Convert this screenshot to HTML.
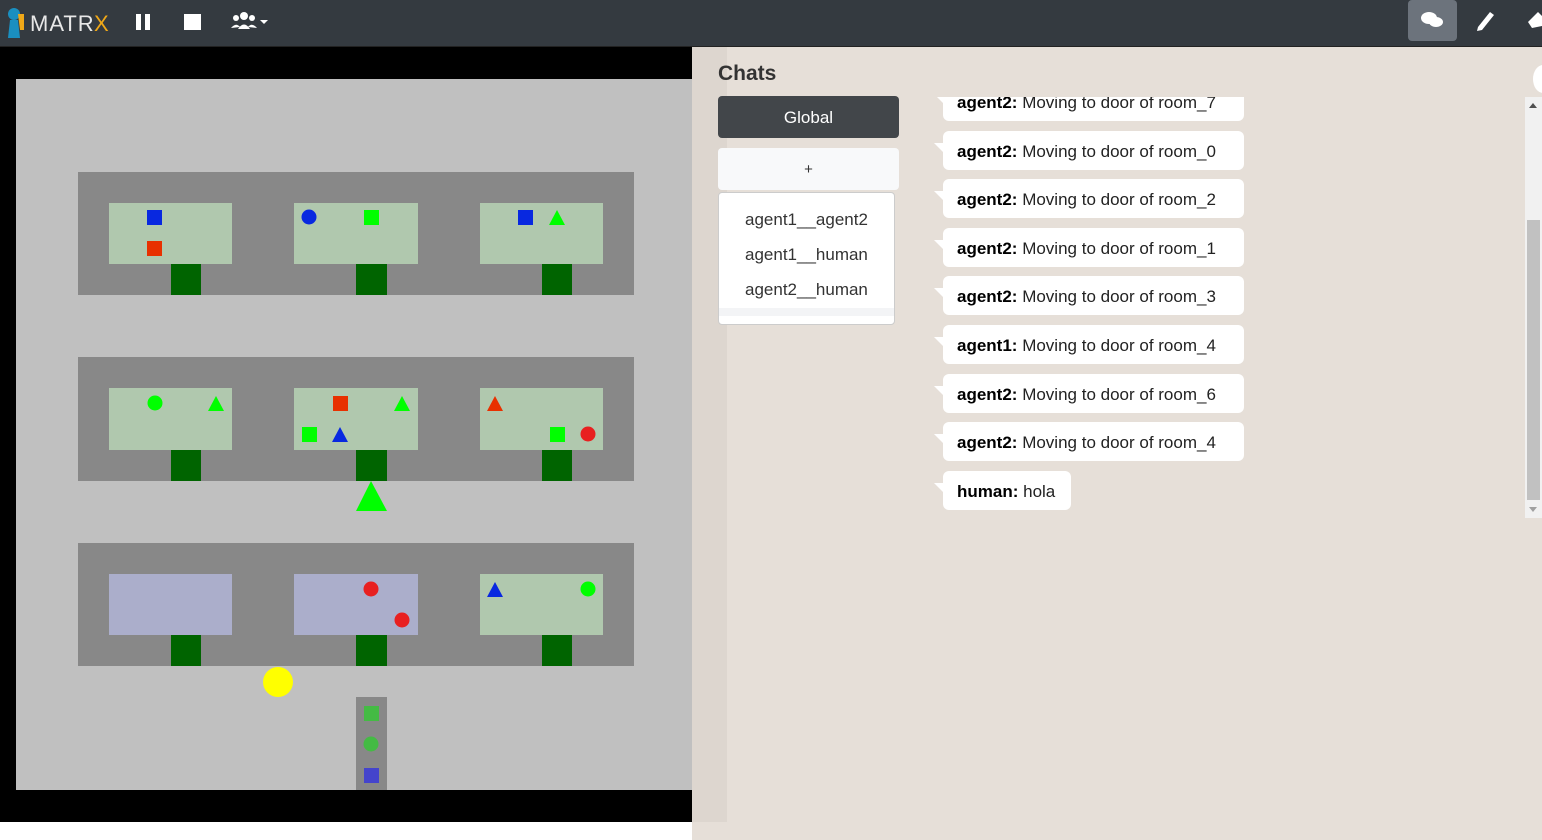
<!DOCTYPE html>
<html><head><meta charset="utf-8"><style>
*{margin:0;padding:0;box-sizing:border-box}
body{width:1542px;height:840px;overflow:hidden;background:#fff;font-family:"Liberation Sans",sans-serif;position:relative}
.nav{position:absolute;left:0;top:0;width:1542px;height:47px;background:#343a40;border-bottom:1px solid #222}
.black{position:absolute;left:0;top:47px;width:692px;height:775px;background:#000}
.panel{position:absolute;left:692px;top:47px;width:850px;height:793px;background:#e6dfd8}
.strip{position:absolute;left:0;top:0;width:35px;height:775px;background:#ddd6cf}
.bub{position:absolute;left:251px;height:39px;background:#fff;border-radius:6px;font-size:17px;line-height:41px;padding-left:14px;color:#222;white-space:nowrap}
.bub:before{content:"";position:absolute;left:-9px;top:12px;border-top:0 solid transparent;border-right:10px solid #fff;border-bottom:10px solid transparent}
.bub b{color:#000}
</style></head><body>
<div class="nav">
 <svg width="300" height="47" style="position:absolute;left:0;top:0">
  <circle cx="14" cy="14" r="6" fill="#1a8fc0"/>
  <path d="M10 20 L18 20 L20 38 L8 38 Z" fill="#1a8fc0"/>
  <path d="M18 14 L24 14 L24 30 L20 30 Z" fill="#f0a818"/>
  <text x="30" y="31" font-family="Liberation Sans" font-size="22" fill="#e8e8e8" letter-spacing="1">MATR</text>
  <text x="94" y="31" font-family="Liberation Sans" font-size="22" fill="#f0a818">X</text>
  <rect x="136" y="14" width="5" height="16" fill="#fff"/><rect x="145" y="14" width="5" height="16" fill="#fff"/>
  <rect x="184" y="14" width="17" height="16" fill="#fff"/>
  <circle cx="244" cy="16" r="4" fill="#fff"/><circle cx="236" cy="18" r="3" fill="#fff"/><circle cx="252" cy="18" r="3" fill="#fff"/>
  <path d="M238 29 Q244 20 250 29 Z M231 28 Q236 22 240 27 Z M248 27 Q252 22 257 28 Z" fill="#fff"/>
  <path d="M260 20 L268 20 L264 24 Z" fill="#fff"/>
 </svg>
 <div style="position:absolute;left:1408px;top:0;width:49px;height:41px;background:#6c737c;border-radius:4px"></div>
 <svg width="134" height="47" style="position:absolute;left:1408px;top:0">
  <ellipse cx="21" cy="18" rx="8" ry="6" fill="#fff"/><ellipse cx="28" cy="22" rx="7" ry="5" fill="#fff"/>
  <path d="M70 27 L82 12 L86 15 L74 30 L69 31 Z" fill="#fff"/>
  <path d="M120 22 L130 12 L134 16 L134 26 L124 28 Z" fill="#fff"/>
 </svg>
</div>
<div class="black"></div>
<svg width="676" height="711" style="position:absolute;left:16px;top:79px">
 <g transform="translate(-16,-79)">
 <rect x="16" y="79" width="676" height="711" fill="#c0c0c0"/>
 <rect x="78" y="172" width="556" height="123" fill="#888"/>
 <rect x="78" y="357" width="556" height="124" fill="#888"/>
 <rect x="78" y="543" width="556" height="123" fill="#888"/>
 <g fill="#b0c8ae">
  <rect x="109" y="203" width="123" height="61"/><rect x="294" y="203" width="124" height="61"/><rect x="480" y="203" width="123" height="61"/>
  <rect x="109" y="388" width="123" height="62"/><rect x="294" y="388" width="124" height="62"/><rect x="480" y="388" width="123" height="62"/>
  <rect x="480" y="574" width="123" height="61"/>
 </g>
 <rect x="109" y="574" width="123" height="61" fill="#abaecb"/><rect x="294" y="574" width="124" height="61" fill="#abaecb"/>
 <g fill="#006400">
  <rect x="171" y="264" width="30" height="31"/><rect x="356" y="264" width="31" height="31"/><rect x="542" y="264" width="30" height="31"/>
  <rect x="171" y="450" width="30" height="31"/><rect x="356" y="450" width="31" height="31"/><rect x="542" y="450" width="30" height="31"/>
  <rect x="171" y="635" width="30" height="31"/><rect x="356" y="635" width="31" height="31"/><rect x="542" y="635" width="30" height="31"/>
 </g>
 <rect x="147" y="210" width="15" height="15" fill="#0828e0"/>
 <rect x="147" y="241" width="15" height="15" fill="#e83000"/>
 <circle cx="309" cy="217" r="7.5" fill="#0828e0"/>
 <rect x="364" y="210" width="15" height="15" fill="#00ff00"/>
 <rect x="518" y="210" width="15" height="15" fill="#0828e0"/>
 <path d="M557 210 L565 225 L549 225Z" fill="#00ff00"/>
 <circle cx="155" cy="403" r="7.5" fill="#00ff00"/>
 <path d="M216 396 L224 411 L208 411Z" fill="#00ff00"/>
 <rect x="333" y="396" width="15" height="15" fill="#e83000"/>
 <path d="M402 396 L410 411 L394 411Z" fill="#00ff00"/>
 <rect x="302" y="427" width="15" height="15" fill="#00ff00"/>
 <path d="M340 427 L348 442 L332 442Z" fill="#0828e0"/>
 <path d="M495 396 L503 411 L487 411Z" fill="#e83000"/>
 <rect x="550" y="427" width="15" height="15" fill="#00ff00"/>
 <circle cx="588" cy="434" r="7.5" fill="#e82020"/>
 <path d="M371 481 L387 511 L356 511Z" fill="#00ff00"/>
 <circle cx="371" cy="589" r="7.5" fill="#e82020"/>
 <circle cx="402" cy="620" r="7.5" fill="#e82020"/>
 <path d="M495 582 L503 597 L487 597Z" fill="#0828e0"/>
 <circle cx="588" cy="589" r="7.5" fill="#00ff00"/>
 <circle cx="278" cy="682" r="15" fill="#ffff00"/>
 <rect x="356" y="697" width="31" height="93" fill="#888"/>
 <rect x="364" y="706" width="15" height="15" fill="#44bb44"/>
 <circle cx="371" cy="744" r="7.5" fill="#44bb44"/>
 <rect x="364" y="768" width="15" height="15" fill="#4444cc"/>
 </g>
</svg>
<div class="panel">
 <div class="strip"></div>
 <div style="position:absolute;left:26px;top:15px;font-size:21px;font-weight:bold;color:#333">Chats</div>
 <div style="position:absolute;left:26px;top:49px;width:181px;height:42px;background:#42464a;border-radius:4px;color:#fff;font-size:17px;text-align:center;line-height:44px">Global</div>
 <div style="position:absolute;left:26px;top:101px;width:181px;height:42px;background:#f8f9fa;border-radius:4px;color:#333;font-size:15px;text-align:center;line-height:44px">+</div>
 <div style="position:absolute;left:26px;top:145px;width:177px;height:133px;background:#fff;border:1px solid #ccc;border-radius:4px;font-size:17px;color:#333">
  <div style="position:absolute;left:26px;top:17px">agent1__agent2</div>
  <div style="position:absolute;left:26px;top:52px">agent1__human</div>
  <div style="position:absolute;left:26px;top:87px">agent2__human</div>
  <div style="position:absolute;left:0;top:115px;width:175px;height:8px;background:#f3f4f6"></div>
 </div>
 <div style="position:absolute;left:0;top:50px;width:833px;height:421px;overflow:hidden">
  <div class="bub" style="top:-15px;width:301px"><b>agent2:</b> Moving to door of room_7</div>
  <div class="bub" style="top:34px;width:301px"><b>agent2:</b> Moving to door of room_0</div>
  <div class="bub" style="top:82px;width:301px"><b>agent2:</b> Moving to door of room_2</div>
  <div class="bub" style="top:131px;width:301px"><b>agent2:</b> Moving to door of room_1</div>
  <div class="bub" style="top:179px;width:301px"><b>agent2:</b> Moving to door of room_3</div>
  <div class="bub" style="top:228px;width:301px"><b>agent1:</b> Moving to door of room_4</div>
  <div class="bub" style="top:277px;width:301px"><b>agent2:</b> Moving to door of room_6</div>
  <div class="bub" style="top:325px;width:301px"><b>agent2:</b> Moving to door of room_4</div>
  <div class="bub" style="top:374px;width:128px"><b>human:</b> hola</div>
 </div>
 <div style="position:absolute;left:833px;top:50px;width:17px;height:421px;background:#f1f1f1">
  <div style="position:absolute;left:2px;top:123px;width:13px;height:280px;background:#c1c1c1"></div>
  <div style="position:absolute;left:4px;top:6px;border-left:4px solid transparent;border-right:4px solid transparent;border-bottom:5px solid #505050"></div>
  <div style="position:absolute;left:4px;top:410px;border-left:4px solid transparent;border-right:4px solid transparent;border-top:5px solid #a0a0a0"></div>
 </div>
 <div style="position:absolute;left:841px;top:18px;width:20px;height:28px;background:#fff;border-radius:50%"></div>
</div>
</body></html>
